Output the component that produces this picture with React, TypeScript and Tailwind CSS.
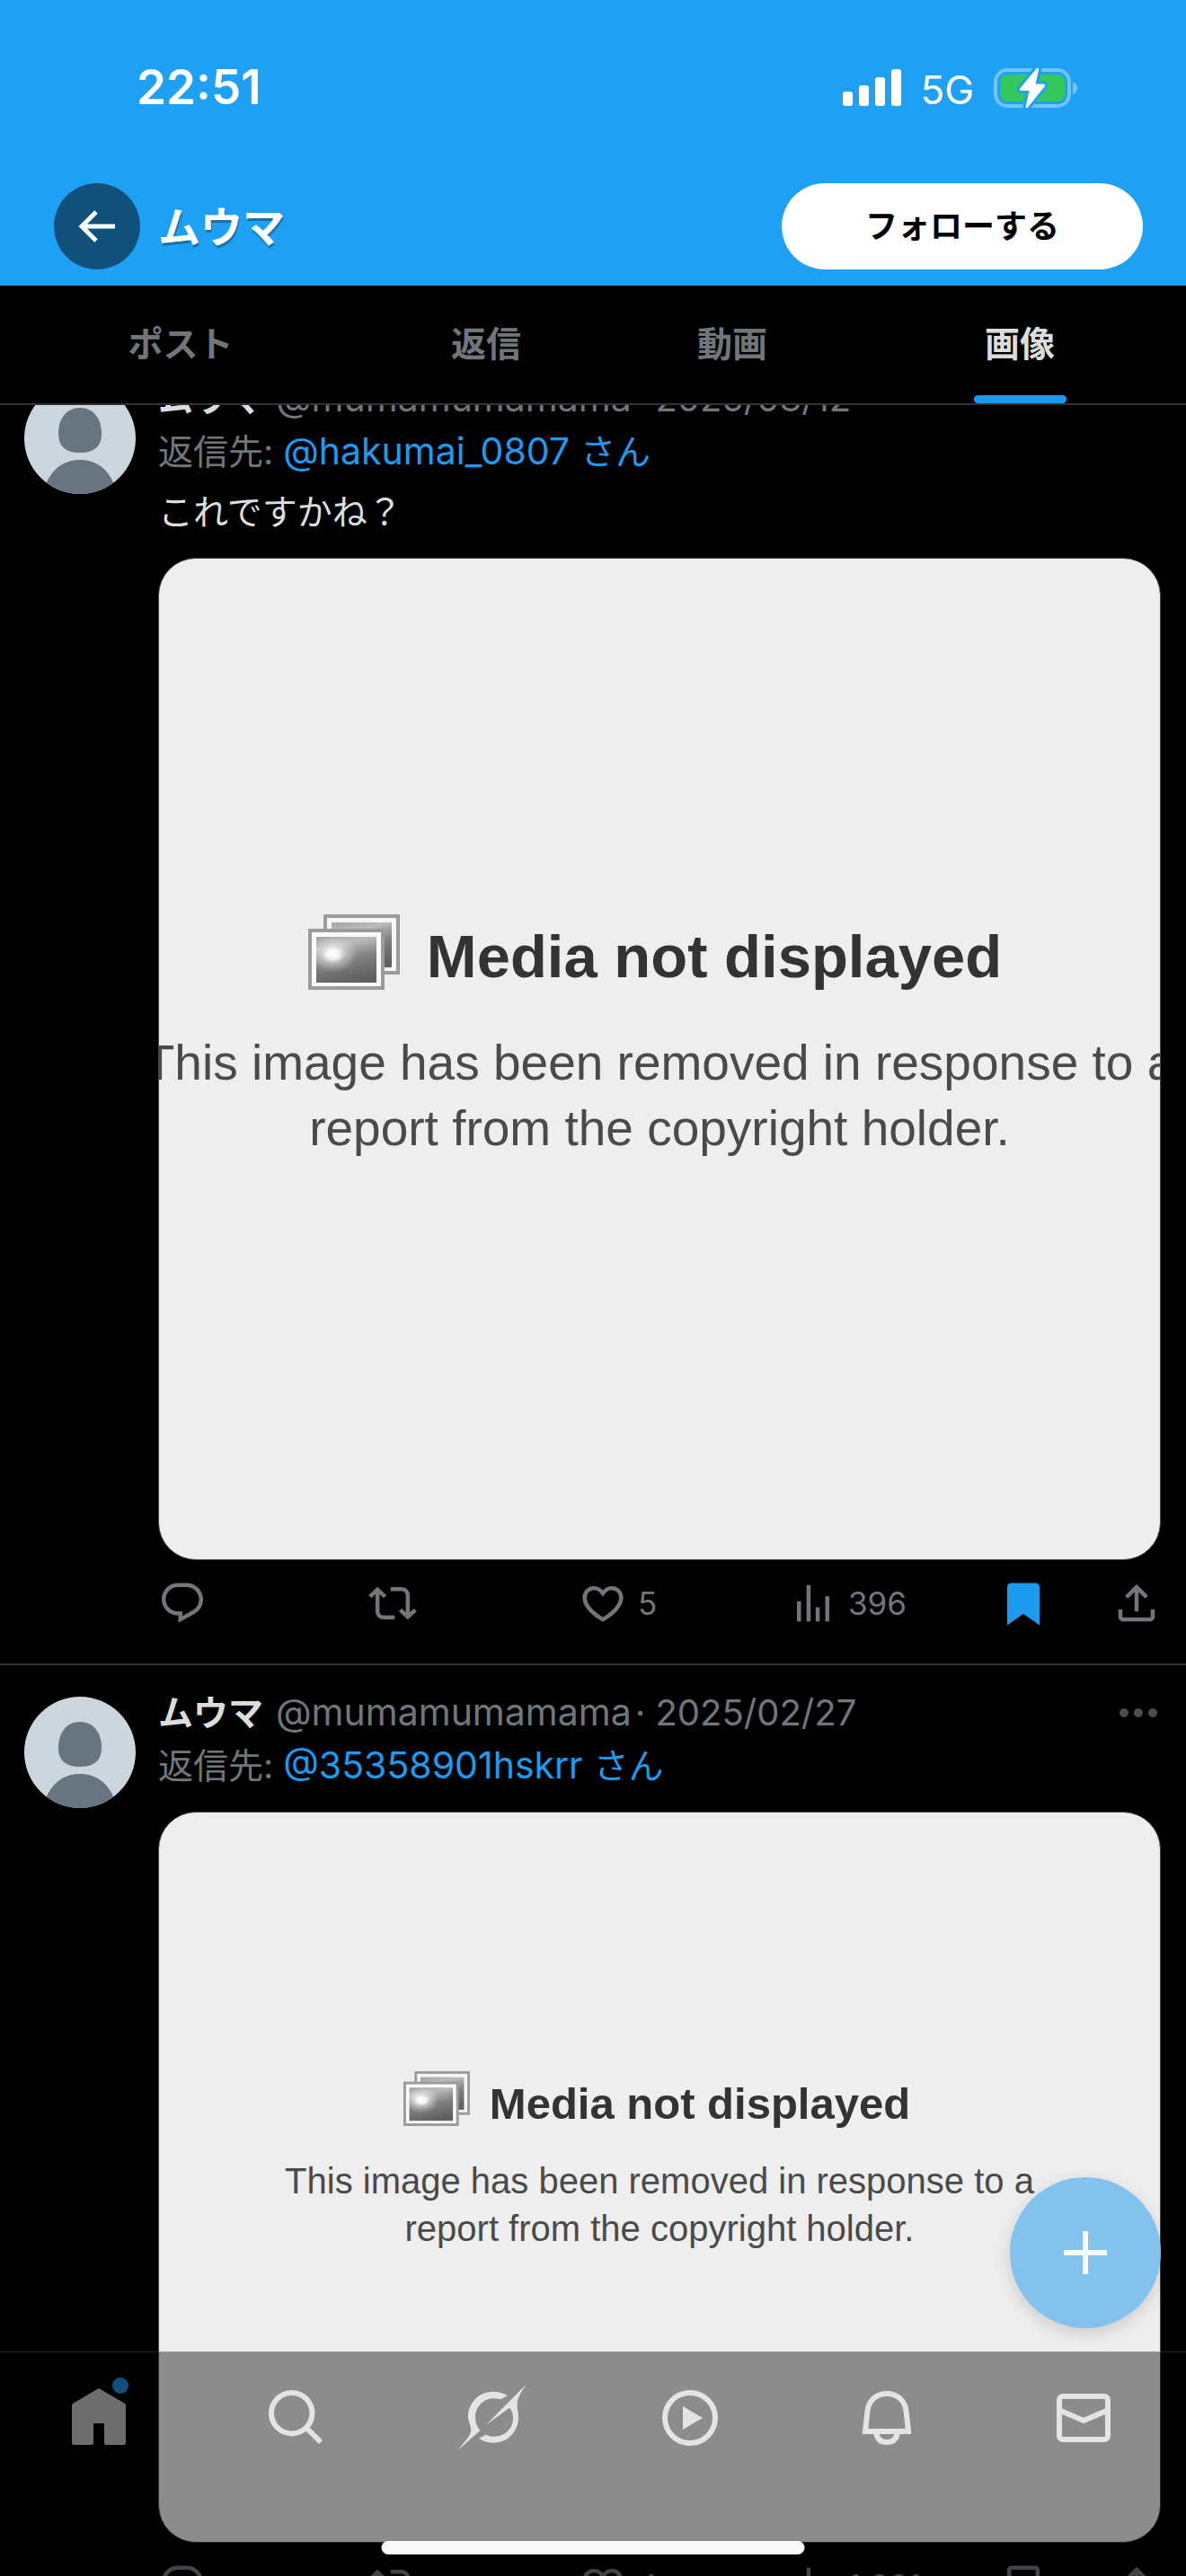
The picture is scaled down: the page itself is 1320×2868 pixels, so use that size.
import type { ReactNode } from 'react'

interface Post {
  id: string
  date: string
  replyTo: string
  body?: string
  media: 'large' | 'small'
  likes: string
  views: string
  bookmarked: boolean
}

const POSTS: Post[] = [
  { id: 'p1', date: '2025/03/12', replyTo: '@hakumai_0807', body: 'これですかね？', media: 'large', likes: '5', views: '396', bookmarked: true },
  { id: 'p2', date: '2025/02/27', replyTo: '@35358901hskrr', media: 'small', likes: '4', views: '1,221', bookmarked: false },
]

const TABS = ['ポスト', '返信', '動画', '画像']

const ICONS = {
  reply: 'M1.751 10c0-4.42 3.584-8 8.005-8h4.366c4.49 0 8.129 3.64 8.129 8.13 0 2.96-1.607 5.68-4.196 7.11l-8.054 4.46v-3.69h-.067c-4.49.1-8.183-3.51-8.183-8.01zm8.005-6c-3.317 0-6.005 2.69-6.005 6 0 3.37 2.77 6.08 6.138 6.01l.351-.01h1.761v2.3l5.087-2.81c1.951-1.08 3.163-3.13 3.163-5.36 0-3.39-2.744-6.13-6.129-6.13H9.756z',
  repost: 'M4.5 3.88l4.432 4.14-1.364 1.46L5.5 7.55V16c0 1.1.896 2 2 2H13v2H7.5c-2.209 0-4-1.79-4-4V7.55L1.432 9.48.068 8.02 4.5 3.88zM16.5 6H11V4h5.5c2.209 0 4 1.79 4 4v8.45l2.068-1.93 1.364 1.46-4.432 4.14-4.432-4.14 1.364-1.46 2.068 1.93V8c0-1.1-.896-2-2-2z',
  like: 'M16.697 5.5c-1.222-.06-2.679.51-3.89 2.16l-.805 1.09-.806-1.09C9.984 6.01 8.526 5.44 7.304 5.5c-1.243.07-2.349.78-2.91 1.91-.552 1.12-.633 2.78.479 4.82 1.074 1.97 3.257 4.27 7.129 6.61 3.87-2.34 6.052-4.64 7.126-6.61 1.111-2.04 1.03-3.7.477-4.82-.561-1.13-1.666-1.84-2.908-1.91zm4.187 7.69c-1.351 2.48-4.001 5.12-8.379 7.67l-.503.3-.504-.3c-4.379-2.55-7.029-5.19-8.382-7.67-1.36-2.5-1.41-4.86-.514-6.67.887-1.79 2.647-2.91 4.601-3.01 1.651-.09 3.368.56 4.798 2.01 1.429-1.45 3.146-2.1 4.796-2.01 1.954.1 3.714 1.22 4.601 3.01.896 1.81.846 4.17-.514 6.67z',
  views: 'M8.75 21V3h2v18h-2zM18 21V8.5h2V21h-2zM4 21V11h2v10H4zm9.25 0v-7h2v7h-2z',
  bookmark: 'M4 4c0-1.1.9-2 2-2h12c1.1 0 2 .9 2 2v18.94l-8-5.71-8 5.71V4zM6 4v15.06l6-4.29 6 4.29V4H6z',
  bookmarkFilled: 'M4 4c0-1.1.9-2 2-2h12c1.1 0 2 .9 2 2v18.94l-8-5.71-8 5.71V4z',
  share: 'M12 2.59l5.7 5.7-1.41 1.42L13 6.41V16h-2V6.41l-3.3 3.3-1.41-1.42L12 2.59zM21 15v3.5c0 1.38-1.12 2.5-2.5 2.5h-13C4.11 21 3 19.88 3 18.5V15h2v3.5c0 .28.22.5.5.5h13c.28 0 .5-.22.5-.5V15h2z',
}

function StatusBar() {
  return (
    <div className="flex h-[195px] items-center justify-between pl-[152px] pr-[120px] text-white">
      <span className="text-[53px] font-semibold leading-none">22:51</span>
      <div className="flex items-center">
        <svg className="h-[42px] w-[66px]" viewBox="0 0 66 42" fill="currentColor" aria-hidden="true">
          <rect x="0" y="25" width="11" height="16" rx="3" />
          <rect x="18" y="18" width="11" height="23" rx="3" />
          <rect x="36" y="9" width="11" height="32" rx="3" />
          <rect x="54" y="0" width="11" height="41" rx="3" />
        </svg>
        <span className="ml-5 mt-1 text-[44px] leading-none">5G</span>
        <svg className="ml-[22px] h-[46px] w-[94px]" viewBox="0 0 94 46" aria-hidden="true">
          <rect x="2" y="3" width="82" height="40" rx="13" fill="none" stroke="#73c3f8" strokeWidth="4" />
          <path d="M88 16c3 1 5 4 5 7s-2 6-5 7z" fill="#73c3f8" />
          <rect x="7" y="8" width="72" height="30" rx="8" fill="#34c759" />
          <path
            d="M48 .8c1.6-.4 2.4.6 2 2.2L46.5 18.5h9c1.8 0 2.2 1.4 1.2 2.7L38 44.5c-1.2 1.3-2.8.8-2.3-1.2L39.5 26h-9c-1.7 0-2.3-1.3-1.1-2.7z"
            fill="#fff"
            stroke="#1ea0f4"
            strokeWidth="6"
            paintOrder="stroke"
          />
        </svg>
      </div>
    </div>
  )
}

function ProfileHeader() {
  return (
    <header className="h-[318px] shrink-0 bg-[#1ea0f4]">
      <StatusBar />
      <div className="flex items-center pl-15 pr-12 pt-[9px]">
        <button type="button" aria-label="戻る" className="flex size-24 items-center justify-center rounded-full bg-[#10507a]">
          <svg className="size-12" viewBox="0 0 48 48" fill="none" stroke="#fff" strokeWidth="5" aria-hidden="true">
            <path d="M44 24H7M23 8L7 24l16 16" />
          </svg>
        </button>
        <h1 className="ml-5 flex-1 text-[47px] font-bold leading-none text-white [text-shadow:1px_3px_1px_rgba(0,0,0,0.3)]">ムウマ</h1>
        <button type="button" className="h-24 w-[402px] rounded-full bg-white text-[36px] font-bold text-black">フォローする</button>
      </div>
    </header>
  )
}

function Tabs() {
  return (
    <nav className="grid h-[133px] shrink-0 grid-cols-[402fr_278fr_270fr_370fr] border-b-2 border-[#2f3336]">
      {TABS.map((tab, i) => (
        <a key={tab} href="#" className="flex flex-col items-center text-[39px] font-bold">
          <span className={i === 3 ? 'flex flex-1 items-center text-[#dcdddd]' : 'flex flex-1 items-center text-[#71767b]'}>{tab}</span>
          {i === 3 && <span className="-mt-[9px] h-[9px] w-[103px] rounded-full bg-[#1d9bf0]" />}
        </a>
      ))}
    </nav>
  )
}

function Avatar() {
  return (
    <svg className="mt-3 size-[124px] shrink-0 rounded-full" viewBox="0 0 124 124" role="img" aria-label="ムウマ">
      <rect width="124" height="124" fill="#ccd6dd" />
      <path d="M62 28c15 0 24 12 24 29 0 14-8 21-24 21s-24-7-24-21c0-17 9-29 24-29z" fill="#66757f" />
      <path d="M62 86c18 0 32 10 39 30v8H23v-8c7-20 21-30 39-30z" fill="#66757f" />
    </svg>
  )
}

function PhotoStack({ id, className }: { id: string; className: string }) {
  return (
    <svg className={className} viewBox="0 0 102 84" aria-hidden="true">
      <defs>
        <linearGradient id={`${id}-sky`} x1="0.2" y1="0" x2="0.5" y2="1">
          <stop offset="0" stopColor="#a8a8a8" />
          <stop offset="0.2" stopColor="#bcbcbc" />
          <stop offset="0.55" stopColor="#808080" />
          <stop offset="1" stopColor="#606060" />
        </linearGradient>
        <radialGradient id={`${id}-sun`} cx="0.28" cy="0.38" r="0.4">
          <stop offset="0" stopColor="#fff" />
          <stop offset="0.25" stopColor="#fff" stopOpacity="0.9" />
          <stop offset="0.5" stopColor="#fff" stopOpacity="0.4" />
          <stop offset="1" stopColor="#fff" stopOpacity="0" />
        </radialGradient>
      </defs>
      <rect x="19" y="2" width="81" height="63" fill="#f6f6f6" stroke="#9b9b9b" strokeWidth="4" />
      <rect x="26" y="9" width="67" height="50" fill={`url(#${id}-sky)`} />
      <rect x="2" y="18" width="81" height="64" fill="#fafafa" stroke="#9b9b9b" strokeWidth="4" />
      <rect x="9" y="25" width="67" height="51" fill={`url(#${id}-sky)`} />
      <rect x="9" y="25" width="67" height="51" fill={`url(#${id}-sun)`} />
    </svg>
  )
}

const MEDIA_STYLES = {
  large: {
    frame: 'aspect-square pb-12',
    row: 'gap-[30px] pr-[10px]',
    icon: 'h-[84px] w-[102px]',
    title: 'text-[67px] leading-[74px]',
    text: 'mt-[45px] text-[55px] leading-[73px]',
  },
  small: {
    frame: 'aspect-[1116/814] pb-[34px]',
    row: 'gap-[22px] pr-[6px]',
    icon: 'h-[61px] w-[74px]',
    title: 'text-[49px] leading-[50px]',
    text: 'mt-[35px] text-[40px] leading-[53px]',
  },
}

function RemovedMedia({ id, size }: { id: string; size: Post['media'] }) {
  const s = MEDIA_STYLES[size]
  return (
    <div className={`mt-[22px] flex flex-col items-center justify-center overflow-hidden whitespace-nowrap rounded-[42px] border border-[#424547] bg-[#eee] font-['Liberation_Sans',sans-serif] ${s.frame}`}>
      <div className={`flex items-end ${s.row}`}>
        <PhotoStack id={id} className={s.icon} />
        <strong className={`font-bold text-[#333] ${s.title}`}>Media not displayed</strong>
      </div>
      <p className={`text-center text-[#4a4a4a] ${s.text}`}>
        This image has been removed in response to a
        <br />
        report from the copyright holder.
      </p>
    </div>
  )
}

function Action({ label, path, count, className = '' }: { label: string; path: string; count?: string; className?: string }) {
  return (
    <button type="button" aria-label={label} className={`flex items-center gap-3 ${className}`}>
      <svg className="size-[54px] shrink-0" viewBox="0 0 24 24" fill="currentColor" aria-hidden="true">
        <path d={path} />
      </svg>
      {count && <span className="text-[35px] leading-none">{count}</span>}
    </button>
  )
}

function PostItem({ post }: { post: Post }) {
  return (
    <article className="flex gap-[25px] border-b-2 border-[#2f3336] pb-10 pl-[27px] pr-7 pt-[23px] text-[39px] leading-[59px]">
      <Avatar />
      <div className="min-w-0 flex-1">
        <div className="flex items-center text-[#71767b]">
          <span className="font-bold text-[#dcdddd]">ムウマ</span>
          <span className="ml-[14px] text-[41px]">@mumamumamama</span>
          <span className="ml-1 flex-1 text-[40px]">· {post.date}</span>
          <button type="button" aria-label="その他" className="flex gap-[6px] pr-1 text-[#4a4d50]">
            <span className="size-[10px] rounded-full bg-current" />
            <span className="size-[10px] rounded-full bg-current" />
            <span className="size-[10px] rounded-full bg-current" />
          </button>
        </div>
        <p className="text-[#71767b]">
          返信先:{' '}
          <a href="#" className="text-[#1d9bf0]">
            <span className="text-[41px]">{post.replyTo}</span>
            <span className="ml-3">さん</span>
          </a>
        </p>
        {post.body && <p className="mt-2 text-[#dcdddd]">{post.body}</p>}
        <RemovedMedia id={post.id} size={post.media} />
        <div className="mt-[21px] grid grid-cols-[234fr_234fr_234fr_234fr_126fr_54fr] text-[#71767b]">
          <Action label="返信" path={ICONS.reply} />
          <Action label="リポスト" path={ICONS.repost} />
          <Action label="いいね" path={ICONS.like} count={post.likes} />
          <Action label="表示" path={ICONS.views} count={post.views} />
          <Action
            label="ブックマーク"
            path={post.bookmarked ? ICONS.bookmarkFilled : ICONS.bookmark}
            className={post.bookmarked ? 'text-[#1d9bf0]' : ''}
          />
          <Action label="共有" path={ICONS.share} />
        </div>
      </div>
    </article>
  )
}

const NAV_ITEMS: { label: string; icon: ReactNode }[] = [
  {
    label: 'ホーム',
    icon: (
      <>
        <path d="M42 10L71 27q1 1 1 2v42q0 2-2 2H50q-2 0-2-2V49H36v22q0 2-2 2H14q-2 0-2-2V29q0-1 1-2z" fill="#6e6e6e" />
        <circle cx="66" cy="7" r="9" fill="#10507b" />
      </>
    ),
  },
  {
    label: '検索',
    icon: (
      <g fill="none" stroke="#e4e4e4" strokeWidth="6">
        <circle cx="37.7" cy="37.7" r="22.7" />
        <path d="M54 54l16 16" />
      </g>
    ),
  },
  {
    label: 'Grok',
    icon: (
      <g fill="#e4e4e4">
        <path d="M79.3 6L34.7 51 58 34c4-3 5-1 6 3 4 14-5 26.7-21 26.7q-4 0-8.3-2L27 65.7c5 3.5 10 5 16 5C59 70.7 71 58 71 42.7c0-6-1.5-10-1.3-15.5C70 20 74 15 79.3 6z" />
        <path d="M59 18.3c-5-3-10-4.600-16-4.600C27 13.7 15 26 15 42c0 5 3 9 3.3 14C18.5 63 9 71 4.4 78.3L28.4 57C25 53 23 48 23 42.7 23 31 32 21.3 43 21.3q4 0 7.7 1z" />
      </g>
    ),
  },
  {
    label: '動画',
    icon: (
      <>
        <circle cx="42" cy="43" r="28" fill="none" stroke="#e4e4e4" strokeWidth="6" />
        <path d="M34 30l22 13-22 13z" fill="#e4e4e4" />
      </>
    ),
  },
  {
    label: '通知',
    icon: (
      <g fill="none" stroke="#e4e4e4" strokeWidth="6">
        <path d="M18 58l2.5-23C22 23 31 16 42 16s20 7 21.500 19L66 58z" />
        <path d="M30 59c1 7 5 11 12 11s11-4 12-11" />
      </g>
    ),
  },
  {
    label: 'メッセージ',
    icon: (
      <g fill="none" stroke="#e4e4e4" strokeWidth="6">
        <rect x="15" y="19" width="54" height="48" rx="4" />
        <path d="M14 34l28 12 28-12" />
      </g>
    ),
  },
]

function BottomNav() {
  return (
    <nav className="absolute inset-x-0 bottom-0 h-[250px] border-t border-white/15 bg-black/41">
      <div className="grid grid-cols-6 pr-1 pt-[30px]">
        {NAV_ITEMS.map(item => (
          <a key={item.label} href="#" aria-label={item.label} className="flex justify-center">
            <svg className="size-[84px] overflow-visible" viewBox="0 0 84 84" aria-hidden="true">
              {item.icon}
            </svg>
          </a>
        ))}
      </div>
      {/* Home indicator */}
      <div className="absolute bottom-6 left-1/2 h-[15px] w-[471px] -translate-x-1/2 rounded-full bg-[#fafafa]" />
    </nav>
  )
}

export default function App() {
  return (
    <div className="relative flex h-screen flex-col overflow-hidden bg-black font-['Inter','Noto_Sans_CJK_JP',sans-serif]" lang="ja">
      <ProfileHeader />
      <Tabs />
      <main className="min-h-0 flex-1 overflow-hidden">
        {/* The first post is scrolled partly under the tabs */}
        <div className="-mt-[60px]">
          {POSTS.map(post => (
            <PostItem key={post.id} post={post} />
          ))}
        </div>
      </main>
      <button
        type="button"
        aria-label="ポストする"
        className="absolute bottom-[276px] right-7 flex size-[168px] items-center justify-center rounded-full bg-[#84c2ee] shadow-[0_6px_18px_rgba(0,0,0,0.15)]"
      >
        <svg className="size-12" viewBox="0 0 48 48" stroke="#f7f9fa" strokeWidth="6" aria-hidden="true">
          <path d="M24 0v48M0 24h48" />
        </svg>
      </button>
      <BottomNav />
    </div>
  )
}
